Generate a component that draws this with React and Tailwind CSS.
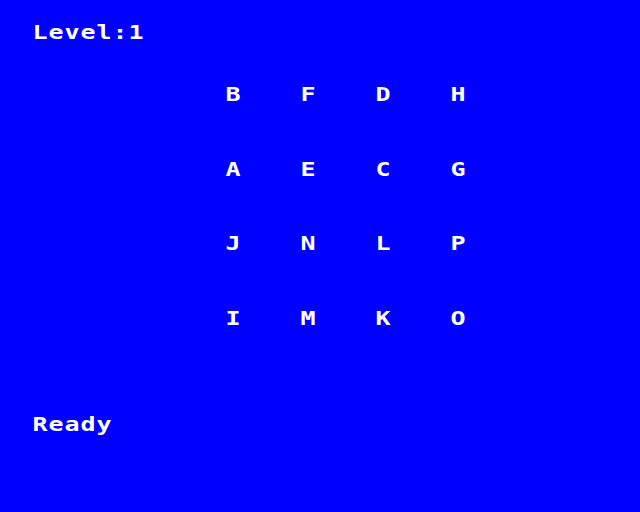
const rows = [
  ["B", "F", "D", "H"],
  ["A", "E", "C", "G"],
  ["J", "N", "L", "P"],
  ["I", "M", "K", "O"],
];

// One character cell, 16px wide like the 40-column screen
const Cell = ({ ch }) => (
  <span className="inline-block w-[16px] text-center scale-x-[1.25] origin-center">
    {ch}
  </span>
);

const Line = ({ text }) => (
  <div className="flex">
    {text.split("").map((ch, i) => (
      <Cell key={i} ch={ch} />
    ))}
  </div>
);

const App = () => {
  return (
    <div className="w-[640px] h-[512px] bg-[#0000ff] text-white font-['DejaVu_Sans_Mono',monospace] font-bold text-[20px] leading-[16px] pt-[24px] pl-[32px] overflow-hidden">
      {/* Level */}
      <Line text="Level:1" />

      {/* Letter grid */}
      <div className="mt-[46px] ml-[193px] grid grid-cols-[75px_75px_75px_75px] gap-y-[58.7px] w-[300px]">
        {rows.flat().map((ch, i) => (
          <div key={i}>
            <Cell ch={ch} />
          </div>
        ))}
      </div>

      {/* Status */}
      <div className="mt-[90px]">
        <Line text="Ready" />
      </div>
    </div>
  );
};

export default App;
